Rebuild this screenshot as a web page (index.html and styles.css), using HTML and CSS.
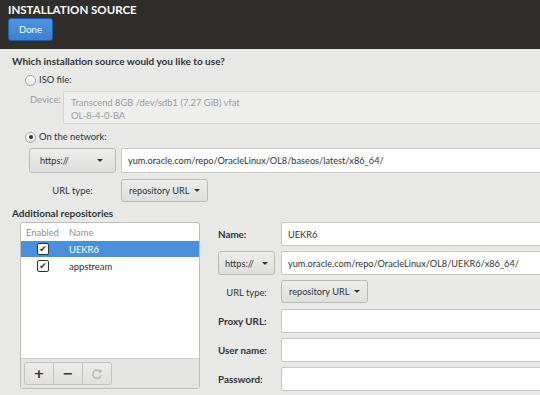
FILE: index.html
```html
<!DOCTYPE html>
<html lang="en">
<head>
  <meta charset="UTF-8">
  <title>Installation Source</title>
  <link rel="stylesheet" href="styles.css">
</head>
<body>

  <header class="topbar">
    <h1 class="title">INSTALLATION SOURCE</h1>
    <button class="done-btn">Done</button>
  </header>

  <main class="content">
    <p class="question">Which installation source would you like to use?</p>

    <div class="radio-row"><span class="radio"></span>ISO file:</div>
    <div class="device-row">
      <span class="device-label">Device:</span>
      <div class="device-box">Transcend 8GB /dev/sdb1 (7.27 GiB) vfat<br>OL-8-4-0-BA</div>
    </div>

    <div class="radio-row"><span class="radio checked"></span>On the network:</div>
    <div class="net-grid">
      <button class="dropdown wide">https:// <span class="caret"></span></button>
      <input class="text-field" value="yum.oracle.com/repo/OracleLinux/OL8/baseos/latest/x86_64/">
      <span class="field-label centered">URL type:</span>
      <div><button class="dropdown">repository URL <span class="caret"></span></button></div>
    </div>

    <p class="section-title">Additional repositories</p>

    <div class="repos">
      <div class="repo-list">
        <div class="list-head">
          <span class="col-enabled">Enabled</span>
          <span>Name</span>
        </div>
        <div class="list-row selected">
          <span class="col-enabled"><span class="check">&#10004;</span></span>
          <span>UEKR6</span>
        </div>
        <div class="list-row">
          <span class="col-enabled"><span class="check">&#10004;</span></span>
          <span>appstream</span>
        </div>
        <div class="list-fill"></div>
        <div class="list-tools">
          <button class="tool-btn">+</button>
          <button class="tool-btn">&minus;</button>
          <button class="tool-btn disabled">
            <svg width="12" height="12" viewBox="0 0 12 12">
              <path d="M9.6 4.2 A4.2 4.2 0 1 0 10 7.4" fill="none" stroke="#b8b9b6" stroke-width="1.6"/>
              <path d="M7.2 4.6 L10.6 4.6 L10.6 1.2 Z" fill="#b8b9b6"/>
            </svg>
          </button>
        </div>
      </div>

      <div class="repo-form">
        <span class="field-label">Name:</span>
        <input class="text-field" value="UEKR6">

        <button class="dropdown small">https:// <span class="caret"></span></button>
        <input class="text-field" value="yum.oracle.com/repo/OracleLinux/OL8/UEKR6/x86_64/">

        <span class="field-label centered">URL type:</span>
        <div><button class="dropdown">repository URL <span class="caret"></span></button></div>

        <span class="field-label">Proxy URL:</span>
        <input class="text-field" value="">

        <span class="field-label">User name:</span>
        <input class="text-field" value="">

        <span class="field-label">Password:</span>
        <input class="text-field" type="password" value="">
      </div>
    </div>
  </main>

</body>
</html>
```

FILE: styles.css
```css
html, body {
  overflow: hidden;
}

body {
  margin: 0;
  width: 540px;
  height: 395px;
  font-family: 'Lato', 'DejaVu Sans', sans-serif;
  font-size: 9.4px;
  background-color: #e8e8e7;
  color: #2e3436;
}

.topbar {
  height: 49px;
  box-sizing: border-box;
  padding: 3px 8px 0;
  background-color: #2f2e2b;
}

.title {
  margin: 0;
  font-size: 11.5px;
  font-weight: bold;
  line-height: 14px;
  color: #ffffff;
}

.done-btn {
  display: block;
  margin-top: 1px;
  width: 45px;
  height: 23px;
  padding: 0;
  border: 1px solid #1d5fa8;
  border-radius: 3px;
  background: linear-gradient(180deg, #4d94de 0%, #3a82d1 100%);
  color: #ffffff;
  font-family: inherit;
  font-size: 9.6px;
}

.content {
  padding: 5px 0 0 12px;
  margin-right: -20px;
}

.question, .section-title {
  margin: 0;
  font-size: 10px;
  line-height: 14px;
  font-weight: bold;
}

.radio-row {
  display: flex;
  align-items: center;
  gap: 3px;
  margin: 5px 0 0 13px;
  line-height: 14px;
}

.radio-row + .net-grid {
  margin-top: 4px;
}

.radio {
  width: 9px;
  height: 9px;
  border: 1px solid #a2a4a1;
  border-radius: 50%;
  background: linear-gradient(180deg, #ffffff, #e6e6e4);
  display: flex;
  align-items: center;
  justify-content: center;
}

.radio.checked::after {
  content: "";
  width: 4px;
  height: 4px;
  border-radius: 50%;
  background-color: #2e3436;
}

.device-row {
  display: flex;
  align-items: flex-start;
  margin: 4px 0 0 18px;
}

.device-row + .radio-row {
  margin-top: 6px;
}

.device-label {
  width: 33px;
  padding-top: 3px;
  color: #9a9c98;
}

.device-box {
  flex: 1;
  height: 33px;
  box-sizing: border-box;
  padding: 4px 7px;
  line-height: 13px;
  border: 1px solid #d3d3d0;
  border-radius: 2px;
  background-color: #eeeeed;
  color: #9a9c98;
}

.net-grid {
  display: grid;
  grid-template-columns: 87px 1fr;
  column-gap: 5px;
  row-gap: 6px;
  margin-left: 17px;
}

.net-grid .text-field {
  height: 25px;
}

.text-field {
  box-sizing: border-box;
  width: 100%;
  height: 24px;
  padding: 0 6px;
  border: 1px solid #c7c7c3;
  border-radius: 2px;
  background-color: #ffffff;
  font-family: inherit;
  font-size: 9.2px;
  color: #2e3436;
}

.dropdown {
  display: inline-flex;
  align-items: center;
  justify-content: space-between;
  gap: 5px;
  box-sizing: border-box;
  height: 23px;
  padding: 0 7px;
  border: 1px solid #b9b9b6;
  border-radius: 3px;
  background: linear-gradient(180deg, #ededec 0%, #dededc 100%);
  font-family: inherit;
  font-size: 9.2px;
  color: #2e3436;
}

.dropdown.wide {
  height: 25px;
  padding: 0 12px 0 10px;
}

.dropdown.small {
  width: 100%;
  height: 24px;
  padding: 0 6px;
}

.caret {
  width: 0;
  height: 0;
  border-left: 3px solid transparent;
  border-right: 3px solid transparent;
  border-top: 3.5px solid #2e3436;
}

.field-label {
  display: flex;
  align-items: center;
  font-size: 9.8px;
  font-weight: bold;
}

.field-label.centered {
  justify-content: center;
  font-size: 9.4px;
  font-weight: normal;
}

.section-title {
  margin-top: 4px;
}

.repos {
  display: flex;
  gap: 18px;
  margin: 2px 0 0 8px;
}

.repo-list {
  display: flex;
  flex-direction: column;
  width: 180px;
  height: 167px;
  box-sizing: border-box;
  border: 1px solid #bdbdba;
  border-radius: 3px;
  background-color: #ffffff;
  overflow: hidden;
}

.list-head, .list-row {
  display: flex;
  align-items: center;
  padding-left: 5px;
}

.list-head {
  height: 18px;
  color: #8d9091;
}

.list-row {
  height: 16px;
}

.list-row + .list-row {
  margin-top: 1px;
}

.list-row.selected {
  background-color: #4a90d9;
  color: #ffffff;
}

.col-enabled {
  width: 43px;
  display: flex;
}

.list-row .col-enabled {
  padding-left: 11px;
  box-sizing: border-box;
}

.check {
  width: 10px;
  height: 10px;
  border: 1px solid #2e3436;
  border-radius: 2px;
  background-color: #ffffff;
  color: #2e3436;
  font-family: 'DejaVu Sans', sans-serif;
  font-size: 9px;
  font-weight: bold;
  line-height: 10px;
  text-align: center;
}

.list-fill {
  flex: 1;
}

.list-tools {
  display: flex;
  height: 30px;
  box-sizing: border-box;
  padding: 3px 3px 0;
  border-top: 1px solid #cfcfcc;
  background-color: #e4e4e2;
}

.tool-btn {
  width: 30px;
  height: 23px;
  padding: 0;
  border: 1px solid #c3c3c0;
  background: linear-gradient(180deg, #ececeb 0%, #e0e0de 100%);
  font-family: 'DejaVu Sans', sans-serif;
  font-size: 13px;
  font-weight: bold;
  color: #2e3436;
  display: flex;
  align-items: center;
  justify-content: center;
}

.tool-btn + .tool-btn {
  margin-left: -1px;
}

.tool-btn:first-child {
  border-radius: 3px 0 0 3px;
}

.tool-btn:last-child {
  border-radius: 0 3px 3px 0;
}

.repo-form {
  flex: 1;
  display: grid;
  grid-template-columns: 57px 1fr;
  grid-auto-rows: 24px;
  column-gap: 6px;
  row-gap: 5px;
}
```
